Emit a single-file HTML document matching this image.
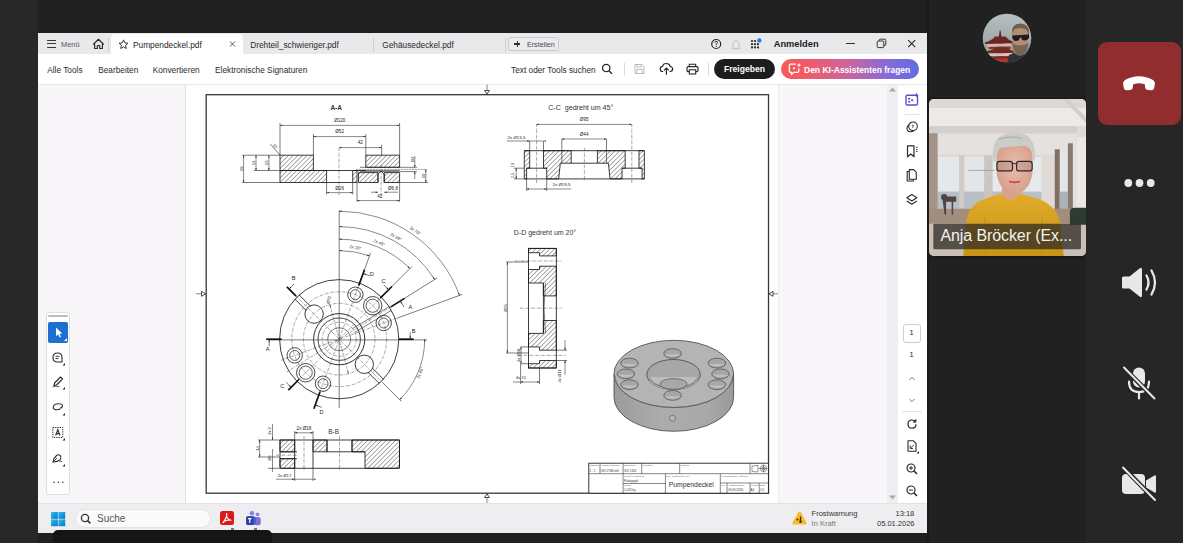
<!DOCTYPE html>
<html><head><meta charset="utf-8">
<style>
*{margin:0;padding:0;box-sizing:border-box}
html,body{width:1183px;height:543px;overflow:hidden;background:#202020;font-family:"Liberation Sans",sans-serif}
.a{position:absolute}
.t{position:absolute;white-space:nowrap;line-height:1}
</style></head><body>
<div class="a" style="left:0;top:0;width:38px;height:543px;background:#282828"></div>
<div class="a" style="left:1086px;top:0;width:97px;height:543px;background:#262626"></div>
<div class="a" style="left:927px;top:0;width:2px;height:543px;background:#1a1a1a"></div>
<!-- screen -->
<div class="a" style="left:38px;top:33px;width:889px;height:500px;background:#fff"></div>
<div class="a" style="left:38px;top:33px;width:889px;height:20.5px;background:#e9e8ea"></div>
<div class="a" style="left:38px;top:83.5px;width:889px;height:1px;background:#e8e8ea"></div>
<div class="a" style="left:38px;top:84.5px;width:147.5px;height:418.5px;background:#f8f6f9"></div>
<div class="a" style="left:185px;top:84.5px;width:1px;height:418.5px;background:#e3e2e5"></div>
<div class="a" style="left:778px;top:84.5px;width:109px;height:418.5px;background:#f8f6f9"></div>
<div class="a" style="left:777.5px;top:84.5px;width:1px;height:418.5px;background:#ececee"></div>
<div class="a" style="left:887px;top:84.5px;width:11px;height:418.5px;background:#efeef1"></div>
<div class="a" style="left:38px;top:503px;width:889px;height:30px;background:#eeedf0"></div>
<div class="a" style="left:38px;top:503px;width:889px;height:1px;background:#e2e1e4"></div>
<!-- TAB BAR -->
<div class="a" style="left:47px;top:40.1px;width:9px;height:1.1px;background:#3a3a3a"></div>
<div class="a" style="left:47px;top:43.3px;width:9px;height:1.1px;background:#3a3a3a"></div>
<div class="a" style="left:47px;top:46.5px;width:9px;height:1.1px;background:#3a3a3a"></div>
<div class="t" style="left:61px;top:40.6px;font-size:7.4px;color:#575757">Menü</div>
<svg class="a" style="left:92px;top:38px" width="13" height="12" viewBox="0 0 13 12"><path d="M1.5 6.2 L6.5 1.3 L11.5 6.2 L10.4 6.2 L10.4 10.5 L7.7 10.5 L7.7 8 Q6.5 6.8 5.3 8 L5.3 10.5 L2.6 10.5 L2.6 6.2 Z" fill="none" stroke="#2e2e2e" stroke-width="1.2" stroke-linejoin="round"/></svg>
<div class="a" style="left:108px;top:38px;width:1px;height:13.5px;background:#cfcfd1"></div>
<div class="a" style="left:111px;top:34.4px;width:131.5px;height:19.5px;background:#fff;border-radius:4px 4px 0 0"></div>
<svg class="a" style="left:118px;top:39px" width="11" height="11" viewBox="0 0 11 11"><path d="M5.5 0.9 L6.8 3.9 L10 4.2 L7.6 6.3 L8.3 9.5 L5.5 7.8 L2.7 9.5 L3.4 6.3 L1 4.2 L4.2 3.9 Z" fill="none" stroke="#3a3a3a" stroke-width="1" stroke-linejoin="round"/></svg>
<div class="t" style="left:133px;top:41.3px;font-size:8.3px;color:#1e1e1e">Pumpendeckel.pdf</div>
<svg class="a" style="left:229px;top:41.3px" width="7" height="6" viewBox="0 0 7 6"><path d="M1 0.5 L6 5.5 M6 0.5 L1 5.5" stroke="#444" stroke-width="0.9"/></svg>
<div class="t" style="left:250.2px;top:41.2px;font-size:8.3px;color:#2a2a2a">Drehteil_schwieriger.pdf</div>
<div class="a" style="left:373px;top:38px;width:1px;height:13.5px;background:#cfcfd1"></div>
<div class="t" style="left:382.3px;top:41.2px;font-size:8.3px;color:#2a2a2a">Gehäusedeckel.pdf</div>
<div class="a" style="left:505px;top:38px;width:1px;height:13.5px;background:#cfcfd1"></div>
<div class="a" style="left:508.3px;top:36.7px;width:51px;height:14.8px;border:1px solid #c9c8cb;border-radius:3px;background:#ebeaec"></div>
<div class="a" style="left:514.2px;top:43.3px;width:5.9px;height:1.3px;background:#2e2e2e"></div>
<div class="a" style="left:516.5px;top:41px;width:1.3px;height:5.9px;background:#2e2e2e"></div>
<div class="t" style="left:526.9px;top:40.6px;font-size:7.2px;color:#4a4a4a">Erstellen</div>
<svg class="a" style="left:710px;top:38px" width="13" height="12" viewBox="0 0 13 12"><circle cx="6.2" cy="6" r="4.5" fill="none" stroke="#2a2a2a" stroke-width="1.2"/><path d="M4.9 4.8 Q4.9 3.4 6.2 3.4 Q7.5 3.4 7.5 4.6 Q7.5 5.4 6.3 6 L6.3 6.9" fill="none" stroke="#2a2a2a" stroke-width="1"/><circle cx="6.3" cy="8.3" r="0.6" fill="#2a2a2a"/></svg>
<svg class="a" style="left:730px;top:38.5px" width="12" height="12" viewBox="0 0 12 12"><path d="M3 8.5 L3 5 Q3 1.4 6 1.4 Q9 1.4 9 5 L9 8.5 L10.3 9.6 L1.7 9.6 Z M5 10.4 Q6 11.5 7 10.4" fill="none" stroke="#c3c3c3" stroke-width="0.9"/></svg>
<svg class="a" style="left:750px;top:38px" width="13" height="12" viewBox="0 0 13 12"><g fill="#2a2a2a"><circle cx="2" cy="3" r="1.1"/><circle cx="5" cy="3" r="1.1"/><circle cx="2" cy="6.2" r="1.1"/><circle cx="5" cy="6.2" r="1.1"/><circle cx="8" cy="6.2" r="1.1"/><circle cx="2" cy="9.4" r="1.1"/><circle cx="5" cy="9.4" r="1.1"/><circle cx="8" cy="9.4" r="1.1"/></g><circle cx="9.3" cy="2.4" r="2.2" fill="#1f7fe0"/></svg>
<div class="t" style="left:773.7px;top:39.6px;font-size:9.3px;font-weight:700;color:#1a1a1a">Anmelden</div>
<div class="a" style="left:846px;top:42.7px;width:9px;height:1.1px;background:#333"></div>
<svg class="a" style="left:876px;top:38px" width="11" height="11" viewBox="0 0 11 11"><rect x="1.2" y="3" width="6.6" height="6.6" rx="1" fill="none" stroke="#333" stroke-width="1"/><path d="M3.2 3 L3.2 2.2 Q3.2 1.2 4.2 1.2 L8.8 1.2 Q9.8 1.2 9.8 2.2 L9.8 6.8 Q9.8 7.6 7.8 7.6" fill="none" stroke="#333" stroke-width="1"/></svg>
<svg class="a" style="left:907px;top:39px" width="10" height="10" viewBox="0 0 10 10"><path d="M1.2 1.2 L8.2 8.2 M8.2 1.2 L1.2 8.2" stroke="#2a2a2a" stroke-width="1.1"/></svg>
<!-- TOOLBAR -->
<div class="t" style="left:47.2px;top:65.7px;font-size:8.3px;color:#2b2b2b">Alle Tools</div>
<div class="t" style="left:98.2px;top:65.7px;font-size:8.3px;color:#2b2b2b">Bearbeiten</div>
<div class="t" style="left:152.7px;top:65.7px;font-size:8.3px;color:#2b2b2b">Konvertieren</div>
<div class="t" style="left:215px;top:65.7px;font-size:8.3px;color:#2b2b2b">Elektronische Signaturen</div>
<div class="t" style="left:511px;top:65.7px;font-size:8.3px;color:#2b2b2b">Text oder Tools suchen</div>
<svg class="a" style="left:601px;top:63px" width="13" height="12" viewBox="0 0 13 12"><circle cx="5.2" cy="5" r="3.7" fill="none" stroke="#2a2a2a" stroke-width="1.3"/><path d="M7.9 7.7 L11 10.8" stroke="#2a2a2a" stroke-width="1.4"/></svg>
<div class="a" style="left:624px;top:63px;width:1px;height:13px;background:#dcdcdc"></div>
<svg class="a" style="left:633px;top:63px" width="13" height="12" viewBox="0 0 13 12"><path d="M2 1.5 L8.8 1.5 L11 3.7 L11 10.5 L2 10.5 Z" fill="none" stroke="#b9b9b9" stroke-width="1"/><rect x="4" y="1.5" width="4.2" height="2.6" fill="none" stroke="#b9b9b9" stroke-width="0.9"/><rect x="3.8" y="6.5" width="5.4" height="4" fill="none" stroke="#b9b9b9" stroke-width="0.9"/></svg>
<svg class="a" style="left:659px;top:62px" width="15" height="14" viewBox="0 0 15 14"><path d="M4.2 9.5 L3.6 9.5 Q1.2 9.3 1.2 6.9 Q1.2 4.7 3.4 4.4 Q4.2 1.5 7.3 1.5 Q10.5 1.5 11.2 4.5 Q13.6 4.8 13.6 7 Q13.6 9.3 11.2 9.5 L10.6 9.5" fill="none" stroke="#2a2a2a" stroke-width="1.2"/><path d="M7.4 12.8 L7.4 6.3 M5 8.4 L7.4 6 L9.8 8.4" fill="none" stroke="#2a2a2a" stroke-width="1.2"/></svg>
<svg class="a" style="left:686px;top:63px" width="13" height="12" viewBox="0 0 13 12"><path d="M3.3 3.5 L3.3 1.2 L9.7 1.2 L9.7 3.5" fill="none" stroke="#2a2a2a" stroke-width="1.1"/><rect x="1" y="3.6" width="11" height="5" rx="1.2" fill="none" stroke="#2a2a2a" stroke-width="1.2"/><rect x="3.3" y="6.8" width="6.4" height="4.2" fill="#fff" stroke="#2a2a2a" stroke-width="1.1"/></svg>
<div class="a" style="left:708px;top:63px;width:1px;height:13px;background:#dcdcdc"></div>
<div class="a" style="left:713.8px;top:58.7px;width:61.2px;height:20.3px;background:#1d1d1d;border-radius:10.2px"></div>
<div class="t" style="left:724px;top:65.4px;font-size:8.6px;font-weight:700;color:#fff">Freigeben</div>
<div class="a" style="left:780.8px;top:59px;width:138.7px;height:20.3px;background:linear-gradient(90deg,#f85a56 0%,#f15a67 18%,#c866a0 50%,#8a6ad4 75%,#5f6ee3 100%);border-radius:10.2px"></div>
<svg class="a" style="left:788px;top:62px" width="14" height="14" viewBox="0 0 14 14"><path d="M8 2.2 L2.6 2.2 Q1.3 2.2 1.3 3.5 L1.3 9 Q1.3 10.3 2.6 10.3 L3.6 10.3 L3.6 12.3 L6 10.3 L9.5 10.3 Q10.8 10.3 10.8 9 L10.8 6.2" fill="none" stroke="#fff" stroke-width="1.2"/><circle cx="6" cy="6.3" r="1" fill="#fff"/><path d="M11 0.8 L11.6 2.5 L13.3 3.1 L11.6 3.7 L11 5.4 L10.4 3.7 L8.7 3.1 L10.4 2.5 Z" fill="#fff"/></svg>
<div class="t" style="left:804px;top:65.6px;font-size:8.5px;font-weight:700;color:#fff">Den KI-Assistenten fragen</div>
<!-- LEFT PALETTE -->
<div class="a" style="left:46.1px;top:312.3px;width:23.6px;height:183.2px;background:#fff;border:1px solid #dedde0;border-radius:3px"></div>
<div class="a" style="left:48.4px;top:315px;width:19.6px;height:1.8px;background:#bdbdbd;border-radius:1px"></div>
<div class="a" style="left:47.5px;top:322px;width:20.5px;height:20.6px;background:#1d6fd0;border-radius:2px"></div>
<svg class="a" style="left:47.5px;top:322px" width="21" height="21" viewBox="0 0 21 21"><path d="M8 5.5 L8 14.2 L10.1 12.3 L11.6 15.6 L13 15 L11.5 11.7 L14.3 11.6 Z" fill="#fff"/><path d="M19 16 L19 19 L16 19 Z" fill="#fff"/></svg>
<svg class="a" style="left:50px;top:350px" width="16" height="16" viewBox="0 0 16 16"><path d="M7.5 12 Q3 12 3 7.5 Q3 3 7.5 3 Q12 3 12 7.5 L12 12 Z" fill="none" stroke="#2a2a2a" stroke-width="1.1" stroke-linejoin="round"/><path d="M5.5 6.3 L9.5 6.3 M5.5 8.5 L8.5 8.5" stroke="#2a2a2a" stroke-width="0.9"/><path d="M15 13 L15 15.5 L12.5 15.5 Z" fill="#222"/></svg>
<svg class="a" style="left:50px;top:374px" width="16" height="16" viewBox="0 0 16 16"><path d="M4 11.5 L4.6 9 L10.5 3 L12.5 5 L6.5 11 Z" fill="none" stroke="#2a2a2a" stroke-width="1.1" stroke-linejoin="round"/><path d="M2.5 12.8 Q6 11.6 9.5 12.8" stroke="#555" stroke-width="0.9" fill="none"/><path d="M15 13 L15 15.5 L12.5 15.5 Z" fill="#222"/></svg>
<svg class="a" style="left:50px;top:400px" width="16" height="16" viewBox="0 0 16 16"><path d="M9.5 8.5 Q12.5 7.8 12.5 5.8 Q12.5 3.8 8.5 3.8 Q3.3 3.8 3.3 7.2 Q3.3 9.8 7.3 9.8 L10 9.2" fill="none" stroke="#2a2a2a" stroke-width="1.1"/><path d="M15 13 L15 15.5 L12.5 15.5 Z" fill="#222"/></svg>
<svg class="a" style="left:50px;top:425px" width="16" height="16" viewBox="0 0 16 16"><rect x="2.8" y="2.5" width="10" height="10" fill="none" stroke="#2a2a2a" stroke-width="1" stroke-dasharray="1.3 1"/><path d="M5.6 10.5 L7.8 4.6 L10 10.5 M6.4 8.6 L9.2 8.6" fill="none" stroke="#2a2a2a" stroke-width="1.1"/><path d="M15 13 L15 15.5 L12.5 15.5 Z" fill="#222"/></svg>
<svg class="a" style="left:50px;top:451px" width="16" height="16" viewBox="0 0 16 16"><path d="M3 11 Q3.5 7 6.8 4.3 Q8.8 3 10.4 4.6 Q11.8 6.3 10.2 8.4 Q7.4 11.3 3 11 Z" fill="none" stroke="#2a2a2a" stroke-width="1.1"/><path d="M3.2 10.8 L7 7" stroke="#2a2a2a" stroke-width="0.9"/><path d="M9.5 10.5 Q11 9 12 11" stroke="#2a2a2a" stroke-width="0.9" fill="none"/><path d="M15 13 L15 15.5 L12.5 15.5 Z" fill="#222"/></svg>
<svg class="a" style="left:52px;top:480px" width="13" height="5" viewBox="0 0 13 5"><circle cx="2" cy="2.3" r="0.8" fill="#333"/><circle cx="6.4" cy="2.3" r="0.8" fill="#333"/><circle cx="10.8" cy="2.3" r="0.8" fill="#333"/></svg>
<!-- SCROLLBAR ARROWS -->
<svg class="a" style="left:888px;top:86px" width="9" height="7" viewBox="0 0 9 7"><path d="M1 5.5 L4.5 1.5 L8 5.5 Z" fill="#a9a9ab"/></svg>
<svg class="a" style="left:888px;top:494px" width="9" height="7" viewBox="0 0 9 7"><path d="M1 1.5 L4.5 5.5 L8 1.5 Z" fill="#a9a9ab"/></svg>
<!-- RIGHT RAIL -->
<svg class="a" style="left:904px;top:92px" width="16" height="15" viewBox="0 0 16 15"><rect x="2" y="3.2" width="11.5" height="9.8" rx="1.2" fill="none" stroke="#5b50cf" stroke-width="1.4"/><rect x="4.2" y="5.8" width="2" height="1.8" fill="#5b50cf"/><rect x="4.2" y="8.8" width="2" height="1.8" fill="#5b50cf"/><rect x="7.2" y="7.3" width="2" height="1.8" fill="#5b50cf"/><path d="M12.6 0.6 L13.3 2.4 L15.2 3 L13.3 3.6 L12.6 5.5 L11.9 3.6 L10 3 L11.9 2.4 Z" fill="#5b50cf"/></svg>
<div class="a" style="left:904.6px;top:113.5px;width:15.5px;height:0.8px;background:#e3e3e3"></div>
<svg class="a" style="left:904px;top:120px" width="16" height="15" viewBox="0 0 16 15"><circle cx="9" cy="6.3" r="4.3" fill="none" stroke="#2a2a2a" stroke-width="1.1"/><path d="M5 5 Q3 6 3 8.3 Q3 11.8 6.5 11.8 Q8.5 11.8 9.6 10.6" fill="none" stroke="#2a2a2a" stroke-width="1.1"/><path d="M8 5.2 L10 5.2 M8 7 L9.8 7" stroke="#2a2a2a" stroke-width="0.8"/></svg>
<svg class="a" style="left:904px;top:144px" width="16" height="15" viewBox="0 0 16 15"><path d="M3.5 1.8 L10 1.8 L10 12.8 L6.75 10 L3.5 12.8 Z" fill="none" stroke="#2a2a2a" stroke-width="1.2" stroke-linejoin="round"/><path d="M12 3.3 L13.6 3.3 M12 5.4 L13.6 5.4 M12 7.5 L13.6 7.5" stroke="#2a2a2a" stroke-width="0.9"/></svg>
<svg class="a" style="left:904px;top:168px" width="16" height="15" viewBox="0 0 16 15"><path d="M5.2 3.5 L3.2 3.5 L3.2 13 L9.5 13 L9.5 11.5" fill="none" stroke="#2a2a2a" stroke-width="1.1"/><path d="M5.3 1.6 L9.5 1.6 L12.3 4.4 L12.3 11.3 L5.3 11.3 Z" fill="none" stroke="#2a2a2a" stroke-width="1.1" stroke-linejoin="round"/></svg>
<svg class="a" style="left:904px;top:192.5px" width="16" height="15" viewBox="0 0 16 15"><path d="M7.8 1.5 L12.8 4.8 L7.8 8 L2.8 4.8 Z" fill="none" stroke="#2a2a2a" stroke-width="1.1" stroke-linejoin="round"/><path d="M2.8 8 L7.8 11.2 L12.8 8" fill="none" stroke="#2a2a2a" stroke-width="1.1" stroke-linejoin="round"/></svg>
<div class="a" style="left:902.8px;top:324px;width:18.4px;height:19px;border:1px solid #cfcfd2;border-radius:3px;background:#fff"></div>
<div class="t" style="left:909.5px;top:328.7px;font-size:7.5px;color:#222">1</div>
<div class="t" style="left:909.5px;top:351.4px;font-size:7.5px;color:#222">1</div>
<svg class="a" style="left:906px;top:374px" width="12" height="9" viewBox="0 0 12 9"><path d="M3.3 6 L6 3.3 L8.7 6" fill="none" stroke="#7a7a7a" stroke-width="1"/></svg>
<svg class="a" style="left:906px;top:395.5px" width="12" height="9" viewBox="0 0 12 9"><path d="M3.3 3 L6 5.7 L8.7 3" fill="none" stroke="#7a7a7a" stroke-width="1"/></svg>
<div class="a" style="left:902px;top:411px;width:20px;height:0.8px;background:#e3e3e3"></div>
<svg class="a" style="left:905px;top:417px" width="14" height="14" viewBox="0 0 14 14"><path d="M11 7.3 Q11 11.2 7 11.2 Q3 11.2 3 7 Q3 3 7 3 Q9.3 3 10.6 4.8" fill="none" stroke="#2a2a2a" stroke-width="1.2"/><path d="M11.3 1.8 L11.3 5.6 L7.6 5.6 Z" fill="#2a2a2a"/></svg>
<svg class="a" style="left:905px;top:439px" width="14" height="15" viewBox="0 0 14 15"><path d="M3 1.8 L8.5 1.8 L11 4.3 L11 12.2 L3 12.2 Z" fill="none" stroke="#2a2a2a" stroke-width="1.1" stroke-linejoin="round"/><path d="M5.2 9.5 L8.8 6 M5.2 6.5 L5.2 9.5 L8 9.5" fill="none" stroke="#2a2a2a" stroke-width="0.9"/><path d="M14 12 L14 14.5 L11.5 14.5 Z" fill="#222"/></svg>
<svg class="a" style="left:905px;top:462px" width="14" height="14" viewBox="0 0 14 14"><circle cx="6" cy="6" r="4" fill="none" stroke="#2a2a2a" stroke-width="1.2"/><path d="M8.9 8.9 L12 12" stroke="#2a2a2a" stroke-width="1.5"/><path d="M4 6 L8 6 M6 4 L6 8" stroke="#2a2a2a" stroke-width="1"/></svg>
<svg class="a" style="left:905px;top:484px" width="14" height="14" viewBox="0 0 14 14"><circle cx="6" cy="6" r="4" fill="none" stroke="#2a2a2a" stroke-width="1.2"/><path d="M8.9 8.9 L12 12" stroke="#2a2a2a" stroke-width="1.5"/><path d="M4 6 L8 6" stroke="#2a2a2a" stroke-width="1"/></svg>
<!-- TASKBAR -->
<svg class="a" style="left:50px;top:510.5px" width="16" height="16" viewBox="0 0 16 16"><defs><linearGradient id="wg" x1="0" y1="0" x2="1" y2="1"><stop offset="0" stop-color="#27c3f0"/><stop offset="1" stop-color="#0f6fc6"/></linearGradient></defs><rect x="1" y="1" width="6.8" height="6.8" fill="url(#wg)"/><rect x="8.4" y="1" width="6.8" height="6.8" fill="url(#wg)"/><rect x="1" y="8.4" width="6.8" height="6.8" fill="url(#wg)"/><rect x="8.4" y="8.4" width="6.8" height="6.8" fill="url(#wg)"/></svg>
<div class="a" style="left:74.6px;top:508.9px;width:136px;height:19.2px;background:#fafafb;border:1px solid #e4e3e6;border-radius:9.6px"></div>
<svg class="a" style="left:80px;top:512.5px" width="12" height="12" viewBox="0 0 12 12"><circle cx="5" cy="5" r="3.6" fill="none" stroke="#333" stroke-width="1.3"/><path d="M7.6 7.6 L10.4 10.4" stroke="#333" stroke-width="1.5"/></svg>
<div class="t" style="left:97px;top:513.9px;font-size:10px;color:#555">Suche</div>
<div class="a" style="left:220px;top:511px;width:13.5px;height:13.5px;background:#d81a1a;border-radius:2.5px"></div>
<svg class="a" style="left:220px;top:511px" width="14" height="14" viewBox="0 0 14 14"><path d="M6.8 2.5 Q6 4.2 7 6.6 Q8 8.6 11 9.2 Q8.5 9 6.8 9.2 Q4.5 9.6 3 11.6 Q5 9 6 6.8 Q7.2 4.2 6.8 2.5 Z" fill="none" stroke="#fff" stroke-width="1.1" stroke-linejoin="round"/></svg>
<svg class="a" style="left:245px;top:510px" width="17" height="17" viewBox="0 0 17 17"><circle cx="7" cy="3.2" r="2.3" fill="#7a86e8"/><circle cx="12.6" cy="4.3" r="1.9" fill="#8e85e0"/><rect x="9.2" y="7" width="6.5" height="8.2" rx="2.5" fill="#7f6fd8"/><rect x="1.2" y="6.3" width="9.5" height="8.8" rx="2" fill="#4a5ac4"/><rect x="1.2" y="6.3" width="7" height="8.8" rx="1.5" fill="#2f3da8"/><path d="M3 8.6 L6.6 8.6 M4.8 8.6 L4.8 13" stroke="#fff" stroke-width="1.2"/></svg>
<div class="a" style="left:231px;top:528px;width:3px;height:2px;background:#777"></div>
<div class="a" style="left:254px;top:528px;width:3px;height:2px;background:#777"></div>
<svg class="a" style="left:791px;top:509.5px" width="17" height="16" viewBox="0 0 17 16"><path d="M8.5 1.5 Q9.2 1.5 9.7 2.3 L15.6 13 Q16 14.4 14.6 14.6 L2.4 14.6 Q1 14.4 1.4 13 L7.3 2.3 Q7.8 1.5 8.5 1.5 Z" fill="#f5bb2e"/><path d="M9.5 6.5 L9.5 10.5" stroke="#3a2a00" stroke-width="1.3"/><circle cx="9.5" cy="11.6" r="1.3" fill="#3a2a00"/><path d="M5.5 9.5 L7.5 9.5 M6.5 8.5 L6.5 10.5" stroke="#3a2a00" stroke-width="0.9"/></svg>
<div class="t" style="left:811.6px;top:509.8px;font-size:7.5px;color:#333">Frostwarnung</div>
<div class="t" style="left:811.6px;top:519.8px;font-size:7.5px;color:#7a7a7a">In Kraft</div>
<div class="t" style="left:895.5px;top:509.8px;font-size:7.5px;color:#333">13:18</div>
<div class="t" style="left:877px;top:519.8px;font-size:7.5px;color:#333">05.01.2026</div>
<div class="a" style="left:53px;top:530.3px;width:219px;height:13px;background:#151515;border-radius:5px 5px 0 0"></div>
<svg class="a" style="left:0;top:0" width="1183" height="543" viewBox="0 0 1183 543" font-family="Liberation Sans, sans-serif">
<defs><pattern id="h" width="3.3" height="3.3" patternUnits="userSpaceOnUse" patternTransform="rotate(45)"><line x1="0" y1="0" x2="0" y2="3.3" stroke="#1f1f1f" stroke-width="0.75"/></pattern></defs>
<rect x="206.2" y="94.7" width="562.3" height="398.5" fill="none" stroke="#383838" stroke-width="1.3"/>
<line x1="487.0" y1="84.5" x2="487.0" y2="94.0" stroke="#333" stroke-width="0.6"/>
<polygon points="484.5,90.5 489.5,90.5 487,94" fill="#fff" stroke="#222" stroke-width="0.8"/>
<line x1="487.0" y1="503.0" x2="487.0" y2="493.5" stroke="#333" stroke-width="0.6"/>
<polygon points="484.5,497.5 489.5,497.5 487,494" fill="#fff" stroke="#222" stroke-width="0.8"/>
<line x1="196.0" y1="293.8" x2="206.0" y2="293.8" stroke="#333" stroke-width="0.6"/>
<polygon points="201.5,291.3 201.5,296.3 205.5,293.8" fill="#fff" stroke="#222" stroke-width="0.8"/>
<line x1="778.0" y1="293.8" x2="768.5" y2="293.8" stroke="#333" stroke-width="0.6"/>
<polygon points="773,291.3 773,296.3 769,293.8" fill="#fff" stroke="#222" stroke-width="0.8"/>
<text x="336.2" y="109.6" font-size="6.5" text-anchor="middle" font-weight="700" fill="#333">A-A</text>
<polygon points="280.0,155.2 313.4,155.2 313.4,170.5 280.0,170.5" fill="url(#h)" stroke="none"/>
<polygon points="280.0,155.2 313.4,155.2 313.4,170.5 280.0,170.5" stroke="#1a1a1a" stroke-width="0.85" fill="none"/>
<polygon points="365.8,155.2 399.6,155.2 399.6,167.3 365.8,167.3" fill="url(#h)" stroke="none"/>
<polygon points="365.8,155.2 399.6,155.2 399.6,167.3 365.8,167.3" stroke="#1a1a1a" stroke-width="0.85" fill="none"/>
<polygon points="280.0,170.5 326.6,170.5 326.6,182.5 280.0,182.5" fill="url(#h)" stroke="none"/>
<polygon points="280.0,170.5 326.6,170.5 326.6,182.5 280.0,182.5" stroke="#1a1a1a" stroke-width="0.85" fill="none"/>
<polygon points="352.7,170.5 357.0,170.5 357.0,182.5 352.7,182.5" fill="url(#h)" stroke="none"/>
<polygon points="352.7,170.5 357.0,170.5 357.0,182.5 352.7,182.5" stroke="#1a1a1a" stroke-width="0.85" fill="none"/>
<polygon points="358.5,172.6 378.0,172.6 378.0,182.5 358.5,182.5" fill="url(#h)" stroke="none"/>
<polygon points="358.5,172.6 378.0,172.6 378.0,182.5 358.5,182.5" stroke="#1a1a1a" stroke-width="0.85" fill="none"/>
<polygon points="384.2,172.6 399.6,172.6 399.6,182.5 384.2,182.5" fill="url(#h)" stroke="none"/>
<polygon points="384.2,172.6 399.6,172.6 399.6,182.5 384.2,182.5" stroke="#1a1a1a" stroke-width="0.85" fill="none"/>
<line x1="313.4" y1="170.5" x2="365.8" y2="170.5" stroke="#1a1a1a" stroke-width="0.85" fill="none"/>
<line x1="326.6" y1="182.5" x2="352.7" y2="182.5" stroke="#1a1a1a" stroke-width="0.85" fill="none"/>
<line x1="357.0" y1="170.5" x2="399.6" y2="170.5" stroke="#222" stroke-width="0.6" fill="none"/>
<line x1="378.0" y1="174.0" x2="378.0" y2="182.5" stroke="#1a1a1a" stroke-width="0.85" fill="none"/>
<line x1="384.2" y1="174.0" x2="384.2" y2="182.5" stroke="#1a1a1a" stroke-width="0.85" fill="none"/>
<path d="M378,174 L381.1,171 L384.2,174" stroke="#1a1a1a" stroke-width="0.85" fill="none"/>
<line x1="356.0" y1="169.4" x2="427.0" y2="169.4" stroke="#333" stroke-width="0.5" stroke-dasharray="2 0.8" fill="none"/>
<line x1="360.0" y1="167.3" x2="399.6" y2="167.3" stroke="#222" stroke-width="0.6" fill="none"/>
<line x1="360.0" y1="171.6" x2="399.6" y2="171.6" stroke="#222" stroke-width="0.6" fill="none"/>
<line x1="339.0" y1="148.0" x2="339.0" y2="195.0" stroke="#333" stroke-width="0.45" stroke-dasharray="3 1 0.6 1" fill="none"/>
<line x1="381.1" y1="165.0" x2="381.1" y2="197.0" stroke="#333" stroke-width="0.45" stroke-dasharray="3 1 0.6 1" fill="none"/>
<line x1="242.2" y1="155.2" x2="280.0" y2="155.2" stroke="#222" stroke-width="0.6" fill="none"/>
<line x1="254.0" y1="170.5" x2="280.0" y2="170.5" stroke="#222" stroke-width="0.6" fill="none"/>
<line x1="242.2" y1="182.5" x2="280.0" y2="182.5" stroke="#222" stroke-width="0.6" fill="none"/>
<line x1="243.6" y1="155.2" x2="243.6" y2="182.5" stroke="#2a2a2a" stroke-width="0.55" fill="none"/>
<polygon points="243.6,155.2 244.3,157.6 242.9,157.6" fill="#222"/>
<polygon points="243.6,182.5 242.9,180.1 244.3,180.1" fill="#222"/>
<text x="242.8" y="168.8" font-size="4.2" text-anchor="middle" font-weight="400" fill="#222" transform="rotate(-90 242.8 168.8)">28</text>
<line x1="256.0" y1="155.2" x2="256.0" y2="170.5" stroke="#2a2a2a" stroke-width="0.55" fill="none"/>
<polygon points="256.0,155.2 256.7,157.6 255.3,157.6" fill="#222"/>
<polygon points="256.0,170.5 255.3,168.1 256.7,168.1" fill="#222"/>
<text x="255.2" y="162.8" font-size="4.2" text-anchor="middle" font-weight="400" fill="#222" transform="rotate(-90 255.2 162.8)">14</text>
<line x1="268.9" y1="155.2" x2="268.9" y2="170.5" stroke="#2a2a2a" stroke-width="0.55" fill="none"/>
<polygon points="268.9,155.2 269.6,157.6 268.2,157.6" fill="#222"/>
<polygon points="268.9,170.5 268.2,168.1 269.6,168.1" fill="#222"/>
<text x="268.1" y="162.8" font-size="4.2" text-anchor="middle" font-weight="400" fill="#222" transform="rotate(-90 268.1 162.8)">15</text>
<line x1="270.3" y1="144.2" x2="280.0" y2="155.0" stroke="#222" stroke-width="0.6" fill="none"/>
<text x="274.0" y="147.0" font-size="4.2" text-anchor="middle" font-weight="400" fill="#222" transform="rotate(48 274.0 147.0)">15</text>
<line x1="280.0" y1="123.0" x2="280.0" y2="155.2" stroke="#222" stroke-width="0.6" fill="none"/>
<line x1="399.6" y1="123.0" x2="399.6" y2="155.2" stroke="#222" stroke-width="0.6" fill="none"/>
<line x1="280.0" y1="125.4" x2="399.6" y2="125.4" stroke="#2a2a2a" stroke-width="0.55" fill="none"/>
<polygon points="280.0,125.4 282.4,124.7 282.4,126.1" fill="#222"/>
<polygon points="399.6,125.4 397.2,126.1 397.2,124.7" fill="#222"/>
<text x="339.8" y="122.0" font-size="4.6" text-anchor="middle" font-weight="400" fill="#222">Ø120</text>
<line x1="313.4" y1="134.0" x2="313.4" y2="155.2" stroke="#222" stroke-width="0.6" fill="none"/>
<line x1="365.8" y1="134.0" x2="365.8" y2="155.2" stroke="#222" stroke-width="0.6" fill="none"/>
<line x1="313.4" y1="136.6" x2="365.8" y2="136.6" stroke="#2a2a2a" stroke-width="0.55" fill="none"/>
<polygon points="313.4,136.6 315.8,135.9 315.8,137.3" fill="#222"/>
<polygon points="365.8,136.6 363.4,137.3 363.4,135.9" fill="#222"/>
<text x="339.6" y="133.0" font-size="4.6" text-anchor="middle" font-weight="400" fill="#222">Ø52</text>
<line x1="381.6" y1="145.0" x2="381.6" y2="155.2" stroke="#222" stroke-width="0.6" fill="none"/>
<line x1="339.0" y1="147.6" x2="381.6" y2="147.6" stroke="#2a2a2a" stroke-width="0.55" fill="none"/>
<polygon points="339.0,147.6 341.4,146.9 341.4,148.3" fill="#222"/>
<polygon points="381.6,147.6 379.2,148.3 379.2,146.9" fill="#222"/>
<text x="360.3" y="144.3" font-size="4.6" text-anchor="middle" font-weight="400" fill="#222">42</text>
<line x1="326.6" y1="182.5" x2="326.6" y2="194.5" stroke="#222" stroke-width="0.6" fill="none"/>
<line x1="352.7" y1="182.5" x2="352.7" y2="194.5" stroke="#222" stroke-width="0.6" fill="none"/>
<line x1="326.6" y1="192.6" x2="352.7" y2="192.6" stroke="#2a2a2a" stroke-width="0.55" fill="none"/>
<polygon points="326.6,192.6 329.0,191.9 329.0,193.3" fill="#222"/>
<polygon points="352.7,192.6 350.3,193.3 350.3,191.9" fill="#222"/>
<text x="339.6" y="189.5" font-size="4.6" text-anchor="middle" font-weight="400" fill="#222">Ø26</text>
<line x1="357.0" y1="182.5" x2="357.0" y2="202.0" stroke="#222" stroke-width="0.6" fill="none"/>
<line x1="399.6" y1="182.5" x2="399.6" y2="202.0" stroke="#222" stroke-width="0.6" fill="none"/>
<line x1="357.0" y1="200.6" x2="399.6" y2="200.6" stroke="#2a2a2a" stroke-width="0.55" fill="none"/>
<polygon points="357.0,200.6 359.4,199.9 359.4,201.3" fill="#222"/>
<polygon points="399.6,200.6 397.2,201.3 397.2,199.9" fill="#222"/>
<text x="379.8" y="197.8" font-size="4.6" text-anchor="middle" font-weight="400" fill="#222">42</text>
<line x1="371.0" y1="192.2" x2="378.0" y2="192.2" stroke="#2a2a2a" stroke-width="0.55" fill="none"/>
<polygon points="378.0,192.2 375.6,192.9 375.6,191.5" fill="#222"/>
<line x1="384.2" y1="192.2" x2="398.0" y2="192.2" stroke="#2a2a2a" stroke-width="0.55" fill="none"/>
<polygon points="384.2,192.2 386.6,191.5 386.6,192.9" fill="#222"/>
<text x="393.0" y="189.5" font-size="4.6" text-anchor="middle" font-weight="400" fill="#222">Ø6,8</text>
<line x1="399.6" y1="167.3" x2="417.0" y2="167.3" stroke="#222" stroke-width="0.6" fill="none"/>
<line x1="399.6" y1="171.6" x2="417.0" y2="171.6" stroke="#222" stroke-width="0.6" fill="none"/>
<line x1="414.8" y1="156.0" x2="414.8" y2="167.3" stroke="#2a2a2a" stroke-width="0.55" fill="none"/>
<polygon points="414.8,167.3 414.1,164.9 415.5,164.9" fill="#222"/>
<line x1="414.8" y1="171.6" x2="414.8" y2="179.0" stroke="#2a2a2a" stroke-width="0.55" fill="none"/>
<polygon points="414.8,171.6 415.5,174.0 414.1,174.0" fill="#222"/>
<text x="413.8" y="159.5" font-size="4.2" text-anchor="middle" font-weight="400" fill="#222" transform="rotate(-90 413.8 159.5)">Ø4</text>
<line x1="399.6" y1="182.5" x2="428.0" y2="182.5" stroke="#222" stroke-width="0.6" fill="none"/>
<line x1="425.8" y1="169.4" x2="425.8" y2="182.5" stroke="#2a2a2a" stroke-width="0.55" fill="none"/>
<polygon points="425.8,169.4 426.5,171.8 425.1,171.8" fill="#222"/>
<polygon points="425.8,182.5 425.1,180.1 426.5,180.1" fill="#222"/>
<text x="425.0" y="176.0" font-size="4.2" text-anchor="middle" font-weight="400" fill="#222" transform="rotate(-90 425.0 176.0)">10</text>
<text x="580.8" y="109.8" font-size="7.1" text-anchor="middle" font-weight="400" fill="#333">C-C&#160; gedreht um 45°</text>
<polygon points="524.3,150.7 529.7,150.7 529.7,168.2 526.6,168.2 526.6,178.9 524.3,178.9" fill="url(#h)" stroke="none"/>
<polygon points="524.3,150.7 529.7,150.7 529.7,168.2 526.6,168.2 526.6,178.9 524.3,178.9" stroke="#1a1a1a" stroke-width="0.85" fill="none"/>
<polygon points="543.5,150.7 571.2,150.7 571.2,163.2 560.3,163.2 558.7,178.9 546.7,178.9 546.7,168.2 543.5,168.2" fill="url(#h)" stroke="none"/>
<polygon points="543.5,150.7 571.2,150.7 571.2,163.2 560.3,163.2 558.7,178.9 546.7,178.9 546.7,168.2 543.5,168.2" stroke="#1a1a1a" stroke-width="0.85" fill="none"/>
<polygon points="597.4,150.7 625.2,150.7 625.2,168.2 622.0,168.2 622.0,178.9 610.0,178.9 608.4,163.2 597.4,163.2" fill="url(#h)" stroke="none"/>
<polygon points="597.4,150.7 625.2,150.7 625.2,168.2 622.0,168.2 622.0,178.9 610.0,178.9 608.4,163.2 597.4,163.2" stroke="#1a1a1a" stroke-width="0.85" fill="none"/>
<polygon points="639.0,150.7 644.4,150.7 644.4,178.9 642.1,178.9 642.1,168.2 639.0,168.2" fill="url(#h)" stroke="none"/>
<polygon points="639.0,150.7 644.4,150.7 644.4,178.9 642.1,178.9 642.1,168.2 639.0,168.2" stroke="#1a1a1a" stroke-width="0.85" fill="none"/>
<line x1="524.3" y1="150.7" x2="644.4" y2="150.7" stroke="#1a1a1a" stroke-width="0.85" fill="none"/>
<line x1="524.3" y1="178.9" x2="644.4" y2="178.9" stroke="#1a1a1a" stroke-width="0.85" fill="none"/>
<line x1="526.6" y1="168.2" x2="546.7" y2="168.2" stroke="#1a1a1a" stroke-width="0.85" fill="none"/>
<line x1="622.0" y1="168.2" x2="642.1" y2="168.2" stroke="#1a1a1a" stroke-width="0.85" fill="none"/>
<line x1="571.2" y1="163.2" x2="597.4" y2="163.2" stroke="#1a1a1a" stroke-width="0.85" fill="none"/>
<line x1="561.8" y1="139.0" x2="561.8" y2="150.7" stroke="#222" stroke-width="0.6" fill="none"/>
<line x1="606.5" y1="139.0" x2="606.5" y2="150.7" stroke="#222" stroke-width="0.6" fill="none"/>
<line x1="561.8" y1="150.7" x2="561.8" y2="163.2" stroke="#222" stroke-width="0.6" fill="none"/>
<line x1="606.5" y1="150.7" x2="606.5" y2="163.2" stroke="#222" stroke-width="0.6" fill="none"/>
<line x1="584.4" y1="148.0" x2="584.4" y2="181.0" stroke="#333" stroke-width="0.45" stroke-dasharray="3 1 0.6 1" fill="none"/>
<line x1="536.6" y1="124.0" x2="536.6" y2="183.0" stroke="#333" stroke-width="0.45" stroke-dasharray="3 1 0.6 1" fill="none"/>
<line x1="631.8" y1="124.0" x2="631.8" y2="183.0" stroke="#333" stroke-width="0.45" stroke-dasharray="3 1 0.6 1" fill="none"/>
<line x1="536.6" y1="124.4" x2="631.8" y2="124.4" stroke="#2a2a2a" stroke-width="0.55" fill="none"/>
<polygon points="536.6,124.4 539.0,123.7 539.0,125.1" fill="#222"/>
<polygon points="631.8,124.4 629.4,125.1 629.4,123.7" fill="#222"/>
<text x="584.2" y="121.0" font-size="4.6" text-anchor="middle" font-weight="400" fill="#222">Ø95</text>
<line x1="561.8" y1="139.0" x2="606.5" y2="139.0" stroke="#2a2a2a" stroke-width="0.55" fill="none"/>
<polygon points="561.8,139.0 564.2,138.3 564.2,139.7" fill="#222"/>
<polygon points="606.5,139.0 604.1,139.7 604.1,138.3" fill="#222"/>
<text x="584.1" y="135.6" font-size="4.6" text-anchor="middle" font-weight="400" fill="#222">Ø44</text>
<line x1="507.0" y1="141.0" x2="543.5" y2="141.0" stroke="#2a2a2a" stroke-width="0.55" fill="none"/>
<polygon points="529.7,141.0 527.3,141.7 527.3,140.3" fill="#222"/>
<polygon points="543.5,141.0 545.9,140.3 545.9,141.7" fill="#222"/>
<line x1="529.7" y1="141.0" x2="529.7" y2="150.7" stroke="#222" stroke-width="0.6" fill="none"/>
<line x1="543.5" y1="141.0" x2="543.5" y2="150.7" stroke="#222" stroke-width="0.6" fill="none"/>
<text x="516.5" y="138.6" font-size="4.4" text-anchor="middle" font-weight="400" fill="#222">2x Ø13,5</text>
<line x1="526.6" y1="178.9" x2="526.6" y2="191.0" stroke="#222" stroke-width="0.6" fill="none"/>
<line x1="546.7" y1="178.9" x2="546.7" y2="191.0" stroke="#222" stroke-width="0.6" fill="none"/>
<line x1="526.6" y1="189.0" x2="571.2" y2="189.0" stroke="#2a2a2a" stroke-width="0.55" fill="none"/>
<polygon points="526.6,189.0 529.0,188.3 529.0,189.7" fill="#222"/>
<polygon points="546.7,189.0 544.3,189.7 544.3,188.3" fill="#222"/>
<text x="561.5" y="186.0" font-size="4.4" text-anchor="middle" font-weight="400" fill="#222">2x Ø19,5</text>
<line x1="514.0" y1="168.2" x2="524.0" y2="168.2" stroke="#222" stroke-width="0.6" fill="none"/>
<line x1="514.0" y1="178.9" x2="524.0" y2="178.9" stroke="#222" stroke-width="0.6" fill="none"/>
<line x1="516.2" y1="168.2" x2="516.2" y2="178.9" stroke="#2a2a2a" stroke-width="0.55" fill="none"/>
<polygon points="516.2,168.2 516.9,170.6 515.5,170.6" fill="#222"/>
<polygon points="516.2,178.9 515.5,176.5 516.9,176.5" fill="#222"/>
<text x="513.8" y="165.0" font-size="3.8" text-anchor="middle" font-weight="400" fill="#222" transform="rotate(-90 513.8 165.0)">10</text>
<text x="513.8" y="175.5" font-size="3.8" text-anchor="middle" font-weight="400" fill="#222" transform="rotate(-90 513.8 175.5)">2,5</text>
<circle cx="339.2" cy="339.2" r="59.6" stroke="#1a1a1a" stroke-width="0.85" fill="none"/>
<circle cx="339.2" cy="339.2" r="47.4" stroke="#333" stroke-width="0.45" stroke-dasharray="3.2 1 0.6 1" fill="none"/>
<circle cx="339.2" cy="339.2" r="35.8" stroke="#333" stroke-width="0.45" stroke-dasharray="3.2 1 0.6 1" fill="none"/>
<circle cx="339.2" cy="339.2" r="25.6" stroke="#1a1a1a" stroke-width="0.9" fill="none"/>
<circle cx="339.2" cy="339.2" r="21.2" stroke="#1a1a1a" stroke-width="0.8" fill="none"/>
<circle cx="339.2" cy="339.2" r="11.5" stroke="#222" stroke-width="0.6" fill="none"/>
<circle cx="339.2" cy="339.2" r="17.0" stroke="#333" stroke-width="0.45" stroke-dasharray="3.2 1 0.6 1" fill="none"/>
<line x1="339.2" y1="210.3" x2="339.2" y2="408.0" stroke="#222" stroke-width="0.6" fill="none"/>
<line x1="270.0" y1="339.9" x2="410.0" y2="339.9" stroke="#222" stroke-width="0.6" fill="none"/>
<line x1="397.5" y1="318.0" x2="280.9" y2="360.4" stroke="#333" stroke-width="0.45" stroke-dasharray="3.2 1 0.6 1" fill="none"/>
<line x1="391.8" y1="306.3" x2="286.6" y2="372.1" stroke="#333" stroke-width="0.45" stroke-dasharray="3.2 1 0.6 1" fill="none"/>
<line x1="383.0" y1="295.4" x2="295.4" y2="383.0" stroke="#333" stroke-width="0.45" stroke-dasharray="3.2 1 0.6 1" fill="none"/>
<line x1="360.4" y1="280.9" x2="318.0" y2="397.5" stroke="#333" stroke-width="0.45" stroke-dasharray="3.2 1 0.6 1" fill="none"/>
<line x1="295.4" y1="295.4" x2="383.0" y2="383.0" stroke="#333" stroke-width="0.45" stroke-dasharray="3.2 1 0.6 1" fill="none"/>
<circle cx="383.7" cy="323.0" r="7.7" stroke="#1a1a1a" stroke-width="0.8" fill="none"/>
<circle cx="383.7" cy="323.0" r="5.0" stroke="#1a1a1a" stroke-width="0.7" fill="none"/>
<circle cx="355.4" cy="294.7" r="7.7" stroke="#1a1a1a" stroke-width="0.8" fill="none"/>
<circle cx="355.4" cy="294.7" r="5.0" stroke="#1a1a1a" stroke-width="0.7" fill="none"/>
<circle cx="294.7" cy="355.4" r="7.7" stroke="#1a1a1a" stroke-width="0.8" fill="none"/>
<circle cx="294.7" cy="355.4" r="5.0" stroke="#1a1a1a" stroke-width="0.7" fill="none"/>
<circle cx="323.0" cy="383.7" r="7.7" stroke="#1a1a1a" stroke-width="0.8" fill="none"/>
<circle cx="323.0" cy="383.7" r="5.0" stroke="#1a1a1a" stroke-width="0.7" fill="none"/>
<circle cx="372.7" cy="305.7" r="9.2" stroke="#1a1a1a" stroke-width="0.8" fill="none"/>
<circle cx="372.7" cy="305.7" r="6.6" stroke="#1a1a1a" stroke-width="0.7" fill="none"/>
<circle cx="305.7" cy="372.7" r="9.2" stroke="#1a1a1a" stroke-width="0.8" fill="none"/>
<circle cx="305.7" cy="372.7" r="6.6" stroke="#1a1a1a" stroke-width="0.7" fill="none"/>
<circle cx="314.1" cy="314.1" r="9.2" stroke="#1a1a1a" stroke-width="0.85" fill="none"/>
<line x1="306.3" y1="310.6" x2="294.7" y2="298.9" stroke="#1a1a1a" stroke-width="0.85" fill="none"/>
<line x1="310.6" y1="306.3" x2="298.9" y2="294.7" stroke="#1a1a1a" stroke-width="0.85" fill="none"/>
<circle cx="364.3" cy="364.3" r="9.2" stroke="#1a1a1a" stroke-width="0.85" fill="none"/>
<line x1="372.1" y1="367.8" x2="383.7" y2="379.5" stroke="#1a1a1a" stroke-width="0.85" fill="none"/>
<line x1="367.8" y1="372.1" x2="379.5" y2="383.7" stroke="#1a1a1a" stroke-width="0.85" fill="none"/>
<line x1="352.6" y1="328.6" x2="389.2" y2="306.6" stroke="#222" stroke-width="0.6" fill="none"/>
<line x1="354.9" y1="332.3" x2="391.4" y2="310.4" stroke="#222" stroke-width="0.6" fill="none"/>
<line x1="281.7" y1="339.2" x2="266.2" y2="339.2" stroke="#111" stroke-width="1.7" fill="none"/>
<line x1="398.7" y1="339.2" x2="413.7" y2="339.2" stroke="#111" stroke-width="1.7" fill="none"/>
<line x1="296.1" y1="296.1" x2="286.9" y2="286.9" stroke="#111" stroke-width="1.7" fill="none"/>
<line x1="380.2" y1="298.2" x2="391.9" y2="286.5" stroke="#111" stroke-width="1.7" fill="none"/>
<line x1="298.9" y1="379.5" x2="288.3" y2="390.1" stroke="#111" stroke-width="1.7" fill="none"/>
<line x1="358.7" y1="285.6" x2="364.5" y2="269.7" stroke="#111" stroke-width="1.7" fill="none"/>
<line x1="320.0" y1="391.8" x2="313.9" y2="408.7" stroke="#111" stroke-width="1.7" fill="none"/>
<line x1="390.9" y1="306.9" x2="404.5" y2="298.4" stroke="#111" stroke-width="1.7" fill="none"/>
<line x1="269.2" y1="346.2" x2="269.2" y2="339.2" stroke="#222" stroke-width="0.6"/>
<polygon points="269.2,339.2 269.9,341.8 268.5,341.8" fill="#222"/>
<text x="267.5" y="351.0" font-size="5.6" text-anchor="middle" font-weight="400" fill="#222">A</text>
<line x1="410.2" y1="332.2" x2="410.2" y2="339.2" stroke="#222" stroke-width="0.6"/>
<polygon points="410.2,339.2 409.5,336.6 410.9,336.6" fill="#222"/>
<text x="413.7" y="333.0" font-size="5.6" text-anchor="middle" font-weight="400" fill="#222">B</text>
<line x1="293.9" y1="284.0" x2="289.0" y2="289.0" stroke="#222" stroke-width="0.6"/>
<polygon points="289.0,289.0 290.3,286.7 291.3,287.7" fill="#222"/>
<text x="293.5" y="280.0" font-size="5.6" text-anchor="middle" font-weight="400" fill="#222">B</text>
<line x1="383.7" y1="284.8" x2="388.7" y2="289.7" stroke="#222" stroke-width="0.6"/>
<polygon points="388.7,289.7 386.4,288.4 387.4,287.4" fill="#222"/>
<text x="383.5" y="283.0" font-size="5.6" text-anchor="middle" font-weight="400" fill="#222">C</text>
<line x1="286.2" y1="382.3" x2="291.1" y2="387.3" stroke="#222" stroke-width="0.6"/>
<polygon points="291.1,387.3 288.8,385.9 289.8,384.9" fill="#222"/>
<text x="282.3" y="387.5" font-size="5.6" text-anchor="middle" font-weight="400" fill="#222">C</text>
<line x1="369.7" y1="275.8" x2="363.1" y2="273.4" stroke="#222" stroke-width="0.6"/>
<polygon points="363.1,273.4 365.8,273.7 365.3,275.0" fill="#222"/>
<text x="371.8" y="276.0" font-size="5.6" text-anchor="middle" font-weight="400" fill="#222">D</text>
<line x1="321.8" y1="407.4" x2="315.3" y2="405.0" stroke="#222" stroke-width="0.6"/>
<polygon points="315.3,405.0 317.9,405.2 317.5,406.5" fill="#222"/>
<text x="321.5" y="414.0" font-size="5.6" text-anchor="middle" font-weight="400" fill="#222">D</text>
<line x1="404.0" y1="307.0" x2="400.3" y2="301.0" stroke="#222" stroke-width="0.6"/>
<polygon points="400.3,301.0 402.2,302.9 401.0,303.6" fill="#222"/>
<text x="410.4" y="309.0" font-size="5.6" text-anchor="middle" font-weight="400" fill="#222">A</text>
<path d="M339.2,250.6 A88.6,88.6 0 0 1 369.5,255.9" stroke="#2a2a2a" stroke-width="0.55" fill="none"/>
<polygon points="339.2,250.6 341.6,249.9 341.6,251.3" fill="#222"/>
<polygon points="369.5,255.9 367.0,255.8 367.5,254.5" fill="#222"/>
<line x1="360.4" y1="280.9" x2="370.5" y2="253.1" stroke="#222" stroke-width="0.6" fill="none"/>
<text x="355.1" y="249.0" font-size="4.2" text-anchor="middle" font-weight="400" fill="#222" transform="rotate(10 355.1 249.0)">2x 20°</text>
<path d="M339.2,239.2 A100,100 0 0 1 409.9,268.5" stroke="#2a2a2a" stroke-width="0.55" fill="none"/>
<polygon points="339.2,239.2 341.6,238.5 341.6,239.9" fill="#222"/>
<polygon points="409.9,268.5 407.7,267.3 408.7,266.3" fill="#222"/>
<line x1="383.0" y1="295.4" x2="412.0" y2="266.4" stroke="#222" stroke-width="0.6" fill="none"/>
<text x="378.6" y="244.0" font-size="4.2" text-anchor="middle" font-weight="400" fill="#222" transform="rotate(22.5 378.6 244.0)">2x 45°</text>
<path d="M339.2,226.6 A112.6,112.6 0 0 1 434.7,279.5" stroke="#2a2a2a" stroke-width="0.55" fill="none"/>
<polygon points="339.2,226.6 341.6,225.9 341.6,227.3" fill="#222"/>
<polygon points="434.7,279.5 432.8,277.9 434.0,277.1" fill="#222"/>
<line x1="390.1" y1="307.4" x2="437.2" y2="277.9" stroke="#222" stroke-width="0.6" fill="none"/>
<text x="395.2" y="238.1" font-size="4.2" text-anchor="middle" font-weight="400" fill="#222" transform="rotate(29 395.2 238.1)">2x 58°</text>
<path d="M339.2,211.2 A128,128 0 0 1 459.5,295.4" stroke="#2a2a2a" stroke-width="0.55" fill="none"/>
<polygon points="339.2,211.2 341.6,210.5 341.6,211.9" fill="#222"/>
<polygon points="459.5,295.4 458.0,293.4 459.3,292.9" fill="#222"/>
<line x1="397.5" y1="318.0" x2="462.3" y2="294.4" stroke="#222" stroke-width="0.6" fill="none"/>
<text x="414.3" y="231.9" font-size="4.2" text-anchor="middle" font-weight="400" fill="#222" transform="rotate(35 414.3 231.9)">2x 70°</text>
<path d="M424.7,339.2 A85.5,85.5 0 0 1 399.7,399.7" stroke="#2a2a2a" stroke-width="0.55" fill="none"/>
<line x1="383.0" y1="383.0" x2="401.4" y2="401.4" stroke="#222" stroke-width="0.6" fill="none"/>
<polygon points="424.7,339.2 425.4,341.6 424.0,341.6" fill="#222"/>
<polygon points="399.7,399.7 400.8,397.4 401.8,398.4" fill="#222"/>
<line x1="410.0" y1="339.9" x2="427.0" y2="339.9" stroke="#222" stroke-width="0.6" fill="none"/>
<text x="421.4" y="373.3" font-size="4.2" text-anchor="middle" font-weight="400" fill="#222" transform="rotate(-67.5 421.4 373.3)">2x 45°</text>
<line x1="339.2" y1="339.2" x2="329.9" y2="304.6" stroke="#333" stroke-width="0.45" stroke-dasharray="2.5 1"/>
<polygon points="329.9,304.6 331.2,306.8 329.9,307.1" fill="#222"/>
<line x1="339.2" y1="339.2" x2="348.5" y2="373.8" stroke="#333" stroke-width="0.45" stroke-dasharray="2.5 1"/>
<polygon points="348.5,373.8 347.2,371.6 348.5,371.3" fill="#222"/>
<text x="330.2" y="300.2" font-size="4.2" text-anchor="middle" font-weight="400" fill="#222" transform="rotate(-75 330.2 300.2)">Ø72</text>
<text x="545.0" y="234.5" font-size="7" text-anchor="middle" font-weight="400" fill="#333">D-D gedreht um 20°</text>
<polygon points="528.5,248.4 556.3,248.4 556.3,255.9 539.5,255.9 539.5,252.7 528.5,252.7" fill="url(#h)" stroke="none"/>
<polygon points="528.5,248.4 556.3,248.4 556.3,255.9 539.5,255.9 539.5,252.7 528.5,252.7" stroke="#1a1a1a" stroke-width="0.85" fill="none"/>
<polygon points="539.5,266.2 556.3,266.2 556.3,295.9 543.4,295.9 543.4,283.0 528.5,283.0 528.5,269.5 539.5,269.5" fill="url(#h)" stroke="none"/>
<polygon points="539.5,266.2 556.3,266.2 556.3,295.9 543.4,295.9 543.4,283.0 528.5,283.0 528.5,269.5 539.5,269.5" stroke="#1a1a1a" stroke-width="0.85" fill="none"/>
<polygon points="528.5,368.0 556.3,368.0 556.3,360.5 539.5,360.5 539.5,363.7 528.5,363.7" fill="url(#h)" stroke="none"/>
<polygon points="528.5,368.0 556.3,368.0 556.3,360.5 539.5,360.5 539.5,363.7 528.5,363.7" stroke="#1a1a1a" stroke-width="0.85" fill="none"/>
<polygon points="539.5,350.2 556.3,350.2 556.3,320.5 543.4,320.5 543.4,333.4 528.5,333.4 528.5,346.9 539.5,346.9" fill="url(#h)" stroke="none"/>
<polygon points="539.5,350.2 556.3,350.2 556.3,320.5 543.4,320.5 543.4,333.4 528.5,333.4 528.5,346.9 539.5,346.9" stroke="#1a1a1a" stroke-width="0.85" fill="none"/>
<rect x="528.5" y="248.4" width="27.8" height="119.6" stroke="#1a1a1a" stroke-width="0.85" fill="none"/>
<line x1="543.4" y1="283.0" x2="543.4" y2="333.4" stroke="#1a1a1a" stroke-width="0.85" fill="none"/>
<path d="M545.5,283 Q542.5,308 545.5,333.4" stroke="#222" stroke-width="0.6" fill="none"/>
<line x1="520.6" y1="346.9" x2="528.5" y2="346.9" stroke="#222" stroke-width="0.6" fill="none"/>
<line x1="520.6" y1="363.7" x2="528.5" y2="363.7" stroke="#222" stroke-width="0.6" fill="none"/>
<line x1="515.0" y1="261.0" x2="562.0" y2="261.0" stroke="#333" stroke-width="0.45" stroke-dasharray="3.2 1 0.6 1" fill="none"/>
<line x1="520.0" y1="308.2" x2="562.0" y2="308.2" stroke="#333" stroke-width="0.45" stroke-dasharray="3.2 1 0.6 1" fill="none"/>
<line x1="518.0" y1="355.4" x2="566.0" y2="355.4" stroke="#333" stroke-width="0.45" stroke-dasharray="3.2 1 0.6 1" fill="none"/>
<line x1="506.0" y1="262.0" x2="528.5" y2="262.0" stroke="#222" stroke-width="0.6" fill="none"/>
<line x1="506.0" y1="353.0" x2="528.5" y2="353.0" stroke="#222" stroke-width="0.6" fill="none"/>
<line x1="507.4" y1="262.0" x2="507.4" y2="353.0" stroke="#2a2a2a" stroke-width="0.55" fill="none"/>
<polygon points="507.4,262.0 508.1,264.4 506.7,264.4" fill="#222"/>
<polygon points="507.4,353.0 506.7,350.6 508.1,350.6" fill="#222"/>
<text x="506.6" y="308.0" font-size="4.2" text-anchor="middle" font-weight="400" fill="#222" transform="rotate(-90 506.6 308.0)">Ø95</text>
<line x1="521.0" y1="346.9" x2="521.0" y2="363.7" stroke="#2a2a2a" stroke-width="0.55" fill="none"/>
<polygon points="521.0,346.9 521.7,349.3 520.3,349.3" fill="#222"/>
<polygon points="521.0,363.7 520.3,361.3 521.7,361.3" fill="#222"/>
<text x="520.2" y="355.3" font-size="4.2" text-anchor="middle" font-weight="400" fill="#222" transform="rotate(-90 520.2 355.3)">4x Ø18</text>
<line x1="556.3" y1="350.2" x2="567.0" y2="350.2" stroke="#222" stroke-width="0.6" fill="none"/>
<line x1="556.3" y1="360.5" x2="567.0" y2="360.5" stroke="#222" stroke-width="0.6" fill="none"/>
<line x1="565.0" y1="340.0" x2="565.0" y2="350.2" stroke="#2a2a2a" stroke-width="0.55" fill="none"/>
<polygon points="565.0,350.2 564.3,347.8 565.7,347.8" fill="#222"/>
<line x1="565.0" y1="360.5" x2="565.0" y2="375.0" stroke="#2a2a2a" stroke-width="0.55" fill="none"/>
<polygon points="565.0,360.5 565.7,362.9 564.3,362.9" fill="#222"/>
<text x="561.3" y="376.0" font-size="4.2" text-anchor="middle" font-weight="400" fill="#222" transform="rotate(-90 561.3 376.0)">4x Ø11</text>
<line x1="520.6" y1="363.7" x2="520.6" y2="384.0" stroke="#222" stroke-width="0.6" fill="none"/>
<line x1="539.5" y1="368.0" x2="539.5" y2="384.0" stroke="#222" stroke-width="0.6" fill="none"/>
<line x1="513.0" y1="382.0" x2="539.5" y2="382.0" stroke="#2a2a2a" stroke-width="0.55" fill="none"/>
<polygon points="520.6,382.0 523.0,381.3 523.0,382.7" fill="#222"/>
<polygon points="539.5,382.0 537.1,382.7 537.1,381.3" fill="#222"/>
<text x="521.0" y="379.4" font-size="4.2" text-anchor="middle" font-weight="400" fill="#222">4x 11</text>
<text x="333.6" y="434.1" font-size="6.5" text-anchor="middle" font-weight="400" fill="#333">B-B</text>
<polygon points="280.0,440.0 294.7,440.0 294.7,451.8 280.0,451.8" fill="url(#h)" stroke="none"/>
<polygon points="280.0,440.0 294.7,440.0 294.7,451.8 280.0,451.8" stroke="#1a1a1a" stroke-width="0.85" fill="none"/>
<polygon points="280.0,458.7 294.7,458.7 294.7,468.3 280.0,468.3" fill="url(#h)" stroke="none"/>
<polygon points="280.0,458.7 294.7,458.7 294.7,468.3 280.0,468.3" stroke="#1a1a1a" stroke-width="0.85" fill="none"/>
<polygon points="313.0,440.0 327.0,440.0 327.0,451.8 313.0,451.8" fill="url(#h)" stroke="none"/>
<polygon points="313.0,440.0 327.0,440.0 327.0,451.8 313.0,451.8" stroke="#1a1a1a" stroke-width="0.85" fill="none"/>
<polygon points="352.0,440.0 399.5,440.0 399.5,468.3 365.0,468.3 365.0,451.8 352.0,451.8" fill="url(#h)" stroke="none"/>
<polygon points="352.0,440.0 399.5,440.0 399.5,468.3 365.0,468.3 365.0,451.8 352.0,451.8" stroke="#1a1a1a" stroke-width="0.85" fill="none"/>
<path d="M280,440 L399.5,440 L399.5,466.3 Q399.5,468.3 397.5,468.3 L282,468.3 Q280,468.3 280,466.3 Z" stroke="#1a1a1a" stroke-width="0.85" fill="none"/>
<line x1="294.7" y1="440.0" x2="294.7" y2="468.3" stroke="#1a1a1a" stroke-width="0.85" fill="none"/>
<line x1="313.0" y1="440.0" x2="313.0" y2="468.3" stroke="#1a1a1a" stroke-width="0.85" fill="none"/>
<line x1="327.0" y1="451.8" x2="365.0" y2="451.8" stroke="#1a1a1a" stroke-width="0.85" fill="none"/>
<line x1="327.0" y1="440.0" x2="327.0" y2="451.8" stroke="#1a1a1a" stroke-width="0.85" fill="none"/>
<line x1="352.0" y1="440.0" x2="352.0" y2="451.8" stroke="#1a1a1a" stroke-width="0.85" fill="none"/>
<line x1="280.0" y1="451.8" x2="297.0" y2="451.8" stroke="#1a1a1a" stroke-width="0.85" fill="none"/>
<line x1="280.0" y1="458.7" x2="297.0" y2="458.7" stroke="#1a1a1a" stroke-width="0.85" fill="none"/>
<line x1="276.0" y1="455.2" x2="298.0" y2="455.2" stroke="#333" stroke-width="0.45" stroke-dasharray="3.2 1 0.6 1" fill="none"/>
<line x1="304.0" y1="436.0" x2="304.0" y2="471.0" stroke="#333" stroke-width="0.45" stroke-dasharray="3.2 1 0.6 1" fill="none"/>
<line x1="339.5" y1="436.0" x2="339.5" y2="471.0" stroke="#333" stroke-width="0.45" stroke-dasharray="3.2 1 0.6 1" fill="none"/>
<line x1="294.7" y1="440.0" x2="294.7" y2="431.0" stroke="#222" stroke-width="0.6" fill="none"/>
<line x1="313.0" y1="440.0" x2="313.0" y2="431.0" stroke="#222" stroke-width="0.6" fill="none"/>
<line x1="294.7" y1="432.8" x2="313.0" y2="432.8" stroke="#2a2a2a" stroke-width="0.55" fill="none"/>
<polygon points="294.7,432.8 297.1,432.1 297.1,433.5" fill="#222"/>
<polygon points="313.0,432.8 310.6,433.5 310.6,432.1" fill="#222"/>
<text x="304.0" y="430.0" font-size="4.6" text-anchor="middle" font-weight="400" fill="#222">2x Ø18</text>
<line x1="294.7" y1="468.3" x2="294.7" y2="481.0" stroke="#222" stroke-width="0.6" fill="none"/>
<line x1="313.0" y1="468.3" x2="313.0" y2="481.0" stroke="#222" stroke-width="0.6" fill="none"/>
<line x1="276.0" y1="479.2" x2="313.0" y2="479.2" stroke="#2a2a2a" stroke-width="0.55" fill="none"/>
<polygon points="294.7,479.2 292.3,479.9 292.3,478.5" fill="#222"/>
<polygon points="313.0,479.2 315.4,478.5 315.4,479.9" fill="#222"/>
<text x="284.5" y="477.0" font-size="4.2" text-anchor="middle" font-weight="400" fill="#222">2x Ø17</text>
<line x1="258.0" y1="440.0" x2="280.0" y2="440.0" stroke="#222" stroke-width="0.6" fill="none"/>
<line x1="258.0" y1="457.0" x2="280.0" y2="457.0" stroke="#222" stroke-width="0.6" fill="none"/>
<line x1="268.0" y1="468.3" x2="280.0" y2="468.3" stroke="#222" stroke-width="0.6" fill="none"/>
<line x1="259.7" y1="440.0" x2="259.7" y2="457.0" stroke="#2a2a2a" stroke-width="0.55" fill="none"/>
<polygon points="259.7,440.0 260.4,442.4 259.0,442.4" fill="#222"/>
<polygon points="259.7,457.0 259.0,454.6 260.4,454.6" fill="#222"/>
<text x="258.9" y="448.5" font-size="4.2" text-anchor="middle" font-weight="400" fill="#222" transform="rotate(-90 258.9 448.5)">14</text>
<line x1="272.5" y1="424.0" x2="272.5" y2="440.0" stroke="#2a2a2a" stroke-width="0.55" fill="none"/>
<polygon points="272.5,440.0 271.8,437.6 273.2,437.6" fill="#222"/>
<text x="270.5" y="431.0" font-size="4" text-anchor="middle" font-weight="400" fill="#222" transform="rotate(-90 270.5 431.0)">2x 2</text>
<line x1="272.5" y1="449.0" x2="272.5" y2="472.0" stroke="#2a2a2a" stroke-width="0.55" fill="none"/>
<text x="270.5" y="458.0" font-size="4" text-anchor="middle" font-weight="400" fill="#222" transform="rotate(-90 270.5 458.0)">Ø6</text>
<defs><linearGradient id="side" x1="0" y1="0" x2="1" y2="0"><stop offset="0" stop-color="#9c9c9c"/><stop offset="0.4" stop-color="#acacac"/><stop offset="0.75" stop-color="#a9a9a9"/><stop offset="1" stop-color="#9a9a9a"/></linearGradient></defs>
<path d="M614.0,373.9 L614.0,397.29999999999995 A59.8,34 0 0 0 733.5999999999999,397.29999999999995 L733.5999999999999,373.9 Z" fill="url(#side)" stroke="#444" stroke-width="0.8"/>
<ellipse cx="673.8" cy="373.9" rx="59.8" ry="33.6" fill="#b4b4b4" stroke="#444" stroke-width="0.8"/>
<path d="M615.3,375.9 A58.5,31.5 0 0 0 732.3,375.9" fill="none" stroke="#666" stroke-width="0.45"/>
<ellipse cx="673.5" cy="374.5" rx="26.7" ry="15" fill="#a7a7a7" stroke="#444" stroke-width="0.8"/>
<path d="M648.5,377 A25,12.5 0 0 0 698.5,377 Z" fill="#bdbdbd" stroke="none"/>
<path d="M649.5,377 A24,10.5 0 0 0 697.5,377" fill="none" stroke="#555" stroke-width="0.6"/>
<path d="M651.5,379.5 A22,8.5 0 0 0 695.5,379.5" fill="none" stroke="#666" stroke-width="0.5"/>
<ellipse cx="673.5" cy="384" rx="13.5" ry="5.4" fill="#a8a8a8" stroke="#444" stroke-width="0.6"/>
<ellipse cx="672.6" cy="353.5" rx="8.8" ry="4.9" fill="#a6a6a6" stroke="#4a4a4a" stroke-width="0.7"/>
<path d="M665.0,354.3 A8.8,4.9 0 0 0 680.2,354.3 Z" fill="#c0c0c0" stroke="none"/>
<ellipse cx="672.6" cy="395.4" rx="8.8" ry="4.9" fill="#a6a6a6" stroke="#4a4a4a" stroke-width="0.7"/>
<path d="M665.0,396.2 A8.8,4.9 0 0 0 680.2,396.2 Z" fill="#c0c0c0" stroke="none"/>
<ellipse cx="629.5" cy="363.1" rx="8.8" ry="4.9" fill="#a6a6a6" stroke="#4a4a4a" stroke-width="0.7"/>
<path d="M621.9,363.90000000000003 A8.8,4.9 0 0 0 637.1,363.90000000000003 Z" fill="#c0c0c0" stroke="none"/>
<ellipse cx="625.9" cy="373.9" rx="8.8" ry="4.9" fill="#a6a6a6" stroke="#4a4a4a" stroke-width="0.7"/>
<path d="M618.3,374.7 A8.8,4.9 0 0 0 633.5,374.7 Z" fill="#c0c0c0" stroke="none"/>
<ellipse cx="629.5" cy="384.7" rx="8.8" ry="4.9" fill="#a6a6a6" stroke="#4a4a4a" stroke-width="0.7"/>
<path d="M621.9,385.5 A8.8,4.9 0 0 0 637.1,385.5 Z" fill="#c0c0c0" stroke="none"/>
<ellipse cx="716.9" cy="363.1" rx="8.8" ry="4.9" fill="#a6a6a6" stroke="#4a4a4a" stroke-width="0.7"/>
<path d="M709.3,363.90000000000003 A8.8,4.9 0 0 0 724.5,363.90000000000003 Z" fill="#c0c0c0" stroke="none"/>
<ellipse cx="720.5" cy="373.9" rx="8.8" ry="4.9" fill="#a6a6a6" stroke="#4a4a4a" stroke-width="0.7"/>
<path d="M712.9,374.7 A8.8,4.9 0 0 0 728.1,374.7 Z" fill="#c0c0c0" stroke="none"/>
<ellipse cx="716.9" cy="384.7" rx="8.8" ry="4.9" fill="#a6a6a6" stroke="#4a4a4a" stroke-width="0.7"/>
<path d="M709.3,385.5 A8.8,4.9 0 0 0 724.5,385.5 Z" fill="#c0c0c0" stroke="none"/>
<circle cx="672.6" cy="418.2" r="3" fill="#b8b8b8" stroke="#555" stroke-width="0.6"/>
<rect x="588.8" y="463.2" width="179.6" height="30" fill="#fff" stroke="#222" stroke-width="0.9"/>
<line x1="588.8" y1="473.7" x2="768.4" y2="473.7" stroke="#222" stroke-width="0.55" fill="none"/>
<line x1="600.0" y1="463.2" x2="600.0" y2="473.7" stroke="#222" stroke-width="0.55" fill="none"/>
<line x1="623.1" y1="463.2" x2="623.1" y2="473.7" stroke="#222" stroke-width="0.55" fill="none"/>
<line x1="641.7" y1="463.2" x2="641.7" y2="473.7" stroke="#222" stroke-width="0.55" fill="none"/>
<line x1="679.7" y1="463.2" x2="679.7" y2="473.7" stroke="#222" stroke-width="0.55" fill="none"/>
<line x1="750.0" y1="463.2" x2="750.0" y2="473.7" stroke="#222" stroke-width="0.55" fill="none"/>
<line x1="623.1" y1="473.7" x2="623.1" y2="493.2" stroke="#222" stroke-width="0.55" fill="none"/>
<line x1="665.4" y1="473.7" x2="665.4" y2="493.2" stroke="#222" stroke-width="0.55" fill="none"/>
<line x1="720.3" y1="473.7" x2="720.3" y2="493.2" stroke="#222" stroke-width="0.55" fill="none"/>
<line x1="623.1" y1="483.5" x2="665.4" y2="483.5" stroke="#222" stroke-width="0.55" fill="none"/>
<line x1="720.3" y1="483.0" x2="768.4" y2="483.0" stroke="#222" stroke-width="0.55" fill="none"/>
<line x1="727.0" y1="483.0" x2="727.0" y2="493.2" stroke="#222" stroke-width="0.55" fill="none"/>
<line x1="750.0" y1="483.0" x2="750.0" y2="493.2" stroke="#222" stroke-width="0.55" fill="none"/>
<line x1="759.2" y1="483.0" x2="759.2" y2="493.2" stroke="#222" stroke-width="0.55" fill="none"/>
<text x="668.8" y="486.5" font-size="6.8" text-anchor="start" font-weight="400" fill="#333">Pumpendeckel</text>
<text x="589.5" y="466.0" font-size="2.4" text-anchor="start" font-weight="400" fill="#555">Maßstab</text>
<text x="600.8" y="466.0" font-size="2.4" text-anchor="start" font-weight="400" fill="#555">Allgemeintoleranz</text>
<text x="623.8" y="466.0" font-size="2.4" text-anchor="start" font-weight="400" fill="#555">Oberfläche</text>
<text x="642.4" y="466.0" font-size="2.4" text-anchor="start" font-weight="400" fill="#555">Werkstoff</text>
<text x="680.4" y="466.0" font-size="2.4" text-anchor="start" font-weight="400" fill="#555">Gewicht</text>
<text x="624.0" y="476.6" font-size="2.4" text-anchor="start" font-weight="400" fill="#555">Ort der Herstellung</text>
<text x="624.0" y="486.3" font-size="2.4" text-anchor="start" font-weight="400" fill="#555">Masse</text>
<text x="666.0" y="476.6" font-size="2.4" text-anchor="start" font-weight="400" fill="#555">Titel, zusätzlicher Titel</text>
<text x="721.0" y="476.6" font-size="2.4" text-anchor="start" font-weight="400" fill="#555">Verantwortliche Abteilung</text>
<text x="721.0" y="485.8" font-size="2.4" text-anchor="start" font-weight="400" fill="#555">Urk</text>
<text x="727.8" y="485.8" font-size="2.4" text-anchor="start" font-weight="400" fill="#555">Ausgabedatum</text>
<text x="750.6" y="485.8" font-size="2.4" text-anchor="start" font-weight="400" fill="#555">Format</text>
<text x="760.0" y="485.8" font-size="2.4" text-anchor="start" font-weight="400" fill="#555">Blatt</text>
<text x="589.5" y="471.5" font-size="3" text-anchor="start" font-weight="400" fill="#333">1 : 1</text>
<text x="600.8" y="471.5" font-size="3" text-anchor="start" font-weight="400" fill="#333">ISO 2768-mK</text>
<text x="623.8" y="471.5" font-size="3" text-anchor="start" font-weight="400" fill="#333">ISO 1302</text>
<text x="624.0" y="481.5" font-size="3" text-anchor="start" font-weight="400" fill="#333">Pädagogik</text>
<text x="624.0" y="491.0" font-size="3" text-anchor="start" font-weight="400" fill="#333">1,023 kg</text>
<text x="728.0" y="491.0" font-size="3" text-anchor="start" font-weight="400" fill="#333">09.03.2019</text>
<text x="750.6" y="491.0" font-size="3" text-anchor="start" font-weight="400" fill="#333">A4</text>
<text x="760.0" y="491.0" font-size="3" text-anchor="start" font-weight="400" fill="#333">1/1</text>
<g stroke="#333" stroke-width="0.5" fill="none"><path d="M752,466 L758,465.5 L758,472 L752,471.5 Z"/><circle cx="763.5" cy="468.5" r="3.2"/><circle cx="763.5" cy="468.5" r="1.6"/><line x1="758.5" y1="468.5" x2="767.5" y2="468.5"/><line x1="763.5" y1="464.5" x2="763.5" y2="472.5"/></g>
</svg>
<!-- RIGHT PANEL -->
<div class="a" style="left:929px;top:0;width:156.5px;height:96.5px;background:#212121;border-radius:0 0 5px 5px"></div>
<div class="a" style="left:929px;top:96.5px;width:156.5px;height:2px;background:#1b1b1b"></div>
<svg class="a" style="left:982px;top:13px" width="50" height="50" viewBox="0 0 50 50">
<defs><clipPath id="av"><circle cx="25" cy="25" r="24.3"/></clipPath>
<linearGradient id="sky" x1="0" y1="0" x2="0" y2="1"><stop offset="0" stop-color="#b9c0c2"/><stop offset="1" stop-color="#8f9799"/></linearGradient>
<filter id="bl1"><feGaussianBlur stdDeviation="0.6"/></filter></defs>
<g clip-path="url(#av)"><rect width="50" height="50" fill="url(#sky)"/>
<g filter="url(#bl1)">
<path d="M15 50 L15 30 L22 30 L22 50 Z" fill="#6e2a24"/>
<path d="M17.6 17.5 L18.6 17.5 L19.5 24 L16.8 24 Z" fill="#5a2c22"/>
<path d="M2.5 29.5 Q10 27.5 13 23.5 L23.5 23.5 Q26 27 31 28.5 L30 30.5 L3.5 31 Z" fill="#6b2822"/>
<path d="M5 31 L29 30.5 L29 33.5 L6 34 Z" fill="#cdb9ad"/>
<path d="M6.5 34 L28.5 33.5 L28.5 36 L7 36 Z" fill="#8c3128"/>
<path d="M3.5 38.5 Q11 37 14 34.5 L25 34.5 Q28 37.5 32 38 L31.5 40 L4.5 40.5 Z" fill="#6f2a23"/>
<path d="M6 40.5 L30 40 L30 43 L7 43.5 Z" fill="#d6c4ba"/>
<path d="M7 43.5 L30 43 L30 46 L8 46 Z" fill="#7f2c25"/>
<path d="M8 46 L31 45.5 L31 50 L8 50 Z" fill="#b8352c"/>
<path d="M25 50 L27 42 L32 40 L42 41 L49 45 L50 50 Z" fill="#2f3134"/>
<path d="M30 17 Q31 11 38 10.5 Q46 10.5 47 18 L46.5 24 L31 24 Z" fill="#6e5e50"/>
<path d="M31 20 Q31 15 38 15 Q46 15 46 21 L46 35 Q43 42 37.5 42 Q32 42 30.5 36 Z" fill="#b68b73"/>
<path d="M30.5 30 Q31 42 38 43 Q45.5 42 46.5 30 Q42 33 38 32 Q34 33 30.5 30 Z" fill="#7a6552"/>
<path d="M30 22.5 L47 21.5 L47 25 Q45 28 42 27.5 Q39.5 27 39 24.5 L38 24.5 Q37 28 34 28 Q31 27.8 30.5 25 Z" fill="#1f1f22"/>
</g></g></svg>
<div class="a" style="left:929px;top:99px;width:156.5px;height:156.5px;border-radius:5px;overflow:hidden;background:#ddd">
<svg width="157" height="157" viewBox="0 0 156 156" style="display:block">
<defs><filter id="bl2" x="-5%" y="-5%" width="110%" height="110%"><feGaussianBlur stdDeviation="0.7"/></filter>
<linearGradient id="sweater" x1="0" y1="0" x2="0" y2="1"><stop offset="0" stop-color="#e0ac2a"/><stop offset="1" stop-color="#c99316"/></linearGradient>
<radialGradient id="face" cx="0.5" cy="0.45" r="0.6"><stop offset="0" stop-color="#ebbcab"/><stop offset="1" stop-color="#d49d8a"/></radialGradient></defs>
<g filter="url(#bl2)">
<rect width="156" height="156" fill="#e3dfdc"/>
<rect y="0" width="156" height="9" fill="#dcd8d6"/>
<rect y="9" width="156" height="18" fill="#eceae8"/>
<rect y="27" width="156" height="7.5" fill="#d4cfcc"/>
<rect y="34.5" width="156" height="21.5" fill="#e5e1de"/>
<path d="M133 0 L138 0 L156 18 L156 24 Z" fill="#d3cecb"/><rect x="147" y="27" width="9" height="29" fill="#dedad7"/>
<rect y="56" width="156" height="55" fill="#d3ccc6"/>
<rect x="8.6" y="57" width="21.5" height="52" fill="#e4e8ea"/>
<rect x="35" y="57" width="20" height="52" fill="#e2e6e9"/>
<rect x="63" y="57" width="49" height="52" fill="#e6eaec"/>
<rect x="8.6" y="92" width="103.4" height="17" fill="#b7c0c6"/>
<rect x="112" y="55" width="13" height="56" fill="#dfdad6"/>
<rect x="125" y="50" width="5" height="62" fill="#7f6f63"/>
<rect x="130" y="50" width="8" height="62" fill="#e3e6e8"/>
<rect x="130" y="92" width="8" height="18" fill="#a9b3b9"/>
<rect x="138" y="44" width="5" height="68" fill="#8a7a6d"/>
<rect x="143" y="44" width="4" height="68" fill="#e0e3e5"/>
<rect x="147" y="38" width="9" height="86" fill="#ebe7e4"/>
<rect x="0" y="34" width="8.6" height="90" fill="#a49388"/>
<rect x="30" y="56" width="5" height="55" fill="#d2cac4"/>
<rect x="55" y="56" width="8" height="55" fill="#cdc5bf"/>
<rect y="109" width="156" height="15" fill="#a38d7c"/>
<rect y="124" width="156" height="32" fill="#c9bfb7"/>
<rect x="39" y="70.5" width="26" height="0.8" fill="#9a9a9a"/>
<path d="M13 97 L27 97 L27 102 L24 102 L24 115 L22.5 115 L22.5 102 L17 102 L17 115 L15.5 115 Z" fill="#4f4540"/>
<circle cx="15" cy="97.5" r="3" fill="#4d4540"/>
<path d="M140 125 L140 112 Q140 108 145 108 L156 108 L156 125 Z" fill="#2e3b33"/>
<path d="M34 156 L37 122 Q39 104 58 98 L72 94 L90 94 L105 98 Q126 104 130 122 L134 156 Z" fill="url(#sweater)"/>
<path d="M55 118 Q58 130 56 156" stroke="#c38d14" stroke-width="1" fill="none"/>
<path d="M113 118 Q110 130 112 156" stroke="#c38d14" stroke-width="1" fill="none"/>
<path d="M72 94 Q81 107 90 94 Z" fill="#d9a08c"/>
<path d="M73 84 L88 84 L90 95 Q81 103 72 95 Z" fill="#d7a28e"/>
<path d="M67 56 Q67 44 85 44 Q103 44 103 57 L103 72 Q101 92 85 95 Q69 92 67 72 Z" fill="url(#face)"/>
<path d="M64 62 Q61 40 74 35.5 Q86 31 97 36 Q107 42 105 62 L102.5 58 Q103 48 95 46.5 Q82 47 71 48.5 Q67 52 67 62 Z" fill="#cbcbca"/>
<path d="M70 40 Q80 36 92 39" stroke="#a9a9a9" stroke-width="1" fill="none"/>
<rect x="67.5" y="62" width="15.5" height="9.5" rx="2.5" fill="rgba(60,60,60,0.12)" stroke="#2a2a2a" stroke-width="1.2"/><rect x="87" y="62" width="15.5" height="9.5" rx="2.5" fill="rgba(60,60,60,0.12)" stroke="#2a2a2a" stroke-width="1.2"/><path d="M83 64.5 Q85 63.5 87 64.5" stroke="#2a2a2a" stroke-width="1" fill="none"/>
<path d="M79.5 82 Q85 83.5 90.5 82" stroke="#c9433d" stroke-width="1.7" fill="none"/>
</g>
<rect x="4.3" y="124" width="146.7" height="25.4" rx="1.5" fill="rgba(45,40,32,0.74)"/>
</svg>
</div>
<div class="t" style="left:940.5px;top:228.3px;font-size:16px;color:#f2f2f2;letter-spacing:-0.1px">Anja Bröcker (Ex...</div>
<div class="a" style="left:929px;top:255.5px;width:156.5px;height:3px;background:#1b1b1b"></div>
<div class="a" style="left:929px;top:258.5px;width:156.5px;height:285px;background:#212121;border-radius:5px 5px 0 0"></div>
<div class="a" style="left:1097.8px;top:41.7px;width:83px;height:83.2px;background:#922d2f;border-radius:9px"></div>
<svg class="a" style="left:1121px;top:73px" width="36" height="20" viewBox="0 0 36 20"><path d="M2.2 11.5 Q1.6 8.5 4.5 6.8 Q10.5 3.3 18 3.3 Q25.5 3.3 31.5 6.8 Q34.4 8.5 33.8 11.5 L33.2 15 Q32.8 17.4 30.4 17.3 L26.8 17 Q24.2 16.7 24.1 14.2 L24 11.6 Q21 10.3 18 10.3 Q15 10.3 12 11.6 L11.9 14.2 Q11.8 16.7 9.2 17 L5.6 17.3 Q3.2 17.4 2.8 15 Z" fill="#fff"/></svg>
<svg class="a" style="left:1122px;top:178px" width="36" height="10" viewBox="0 0 36 10"><circle cx="6.3" cy="5" r="3.9" fill="#e8e8e8"/><circle cx="17.5" cy="5" r="3.9" fill="#e8e8e8"/><circle cx="28.7" cy="5" r="3.9" fill="#e8e8e8"/></svg>
<svg class="a" style="left:1121px;top:266px" width="38" height="33" viewBox="0 0 38 33"><path d="M2.5 10.5 Q1 10.5 1 12 L1 21 Q1 22.5 2.5 22.5 L8.5 22.5 L18.5 30.5 Q21 32.3 21 29.3 L21 3.7 Q21 0.7 18.5 2.5 L8.5 10.5 Z" fill="#e8e8e8"/><path d="M25.5 9.5 Q29.5 16.5 25.5 23.5" stroke="#e8e8e8" stroke-width="2.3" fill="none" stroke-linecap="round"/><path d="M30.5 4.5 Q37.5 16.5 30.5 28.5" stroke="#e8e8e8" stroke-width="2.3" fill="none" stroke-linecap="round"/></svg>
<svg class="a" style="left:1120px;top:364px" width="38" height="38" viewBox="0 0 38 38"><defs><mask id="mm"><rect width="38" height="38" fill="#fff"/><path d="M3 3 L35 35" stroke="#000" stroke-width="4.5"/></mask></defs><g mask="url(#mm)"><rect x="13" y="3.5" width="12" height="20" rx="6" fill="#e8e8e8"/><path d="M9 17.5 Q9 28 19 28 Q29 28 29 17.5" stroke="#e8e8e8" stroke-width="2.2" fill="none" stroke-linecap="round"/><path d="M19 28 L19 34.5" stroke="#e8e8e8" stroke-width="2.2" stroke-linecap="round"/></g><path d="M4 3.5 L34.5 34.5" stroke="#e8e8e8" stroke-width="2" stroke-linecap="round"/></svg>
<svg class="a" style="left:1120px;top:465px" width="38" height="38" viewBox="0 0 38 38"><defs><mask id="cm"><rect width="38" height="38" fill="#fff"/><path d="M3 2 L35 35" stroke="#000" stroke-width="4.5"/></mask></defs><g mask="url(#cm)"><rect x="2" y="9" width="23" height="20" rx="4" fill="#e8e8e8"/><path d="M26 15.5 L34.5 10.5 Q36 9.8 36 11.5 L36 26.5 Q36 28.2 34.5 27.5 L26 22.5 Z" fill="#e8e8e8"/></g><path d="M3 2.5 L35 35" stroke="#e8e8e8" stroke-width="2" stroke-linecap="round"/></svg>
</body></html>
